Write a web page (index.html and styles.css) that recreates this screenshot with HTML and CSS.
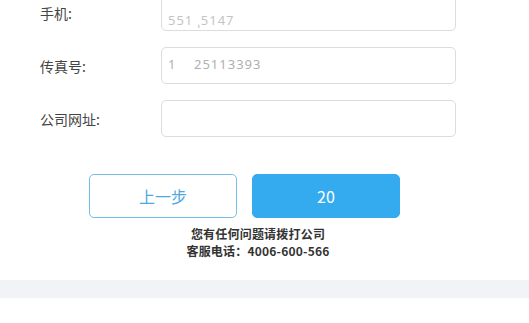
FILE: index.html
```html
<!DOCTYPE html>
<html lang="zh">
<head>
<meta charset="utf-8">
<link rel="stylesheet" href="styles.css">
</head>
<body>
<div class="page">
  <div class="form">
    <div class="row">
      <label class="label">手机:</label>
      <div class="input"><span class="val faint">551 ˌ5147</span></div>
    </div>
    <div class="row">
      <label class="label">传真号:</label>
      <div class="input"><span class="val">1&nbsp;&nbsp;&nbsp;&nbsp;25113393</span></div>
    </div>
    <div class="row">
      <label class="label">公司网址:</label>
      <div class="input"></div>
    </div>
  </div>
  <div class="actions">
    <button class="btn btn-outline">上一步</button>
    <button class="btn btn-primary">20</button>
  </div>
  <div class="help">
    <p>您有任何问题请拨打公司</p>
    <p>客服电话：4006-600-566</p>
  </div>
</div>
<div class="band"></div>
</body>
</html>
```
FILE: styles.css
```css
html, body {
  margin: 0;
  padding: 0;
  background: #fff;
  font-family: "Noto Sans CJK SC", "Noto Sans", sans-serif;
}
.page {
  height: 280px;
  overflow: hidden;
}
.form {
  margin-top: -6px;
  display: flex;
  flex-direction: column;
  gap: 16px;
}
.row {
  display: flex;
  align-items: center;
  padding-left: 40px;
}
.label {
  width: 121px;
  font-size: 14px;
  color: #444;
}
.input {
  width: 287px;
  height: 35px;
  border: 1px solid #dcdcdc;
  border-radius: 5px;
  display: flex;
  align-items: center;
  padding-left: 6px;
  box-sizing: content-box;
}
.val {
  font-family: "Noto Sans", sans-serif;
  font-size: 13px;
  color: #b0b0b0;
  letter-spacing: 1px;
  margin-top: -4px;
}
.faint {
  color: #c4c4c4;
  margin-top: 14px;
}
.actions {
  display: flex;
  gap: 15px;
  padding-left: 89px;
  margin-top: 37px;
}
.btn {
  width: 148px;
  height: 44px;
  border-radius: 5px;
  font-family: "Noto Sans CJK SC", "Noto Sans", sans-serif;
  font-size: 16px;
  padding: 0;
  cursor: pointer;
}
.btn-outline {
  background: #fff;
  border: 1px solid #74bfe9;
  color: #4ca8df;
}
.btn-primary {
  background: #35abef;
  border: 1px solid #35abef;
  color: #fff;
}
.help {
  margin-top: 7px;
  padding-right: 13px;
  text-align: center;
  font-size: 12px;
  font-weight: bold;
  color: #333;
  line-height: 17px;
  letter-spacing: 0.2px;
}
.help p {
  margin: 0;
}
.band {
  height: 18px;
  background: #f2f3f7;
}
```
